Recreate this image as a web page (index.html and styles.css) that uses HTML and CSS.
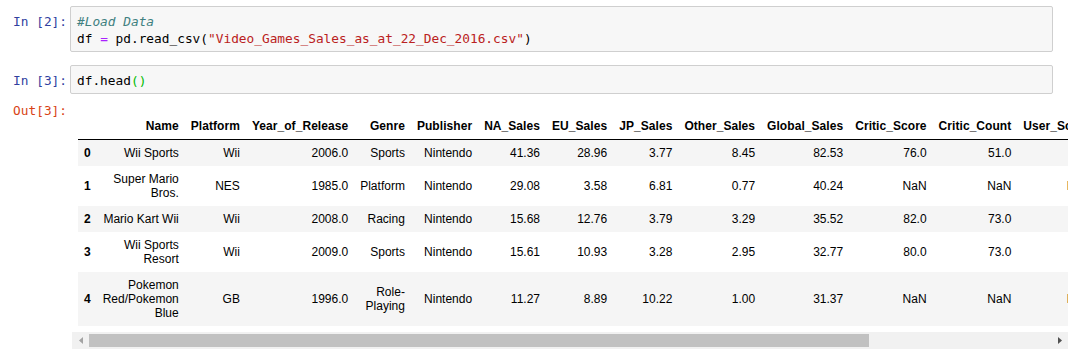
FILE: index.html
```html
<!DOCTYPE html>
<html lang="en">
<head>
<meta charset="utf-8">
<title>Notebook</title>
<link rel="stylesheet" href="styles.css">
</head>
<body>
<div class="notebook">
  <div class="cell">
    <div class="prompt prompt-in">In [2]:</div>
    <div class="input"><pre class="code"><span class="cm-comment">#Load Data</span>
df <span class="cm-operator">=</span> pd.read_csv(<span class="cm-string">"Video_Games_Sales_as_at_22_Dec_2016.csv"</span>)</pre></div>
  </div>
  <div class="cell cell-next">
    <div class="prompt prompt-in">In [3]:</div>
    <div class="input"><pre class="code">df.head<span class="cm-match">()</span></pre></div>
  </div>
  <div class="cell">
    <div class="prompt prompt-out">Out[3]:</div>
    <div class="output-area">
      <div class="table-clip">
        <table class="dataframe">
          <thead>
            <tr>
              <th></th>
              <th>Name</th>
              <th>Platform</th>
              <th>Year_of_Release</th>
              <th>Genre</th>
              <th>Publisher</th>
              <th>NA_Sales</th>
              <th>EU_Sales</th>
              <th>JP_Sales</th>
              <th>Other_Sales</th>
              <th>Global_Sales</th>
              <th>Critic_Score</th>
              <th>Critic_Count</th>
              <th>User_Score</th>
              <th>User_Count</th>
              <th>Developer</th>
              <th>Rating</th>
            </tr>
          </thead>
          <tbody>
            <tr>
              <th>0</th>
              <td>Wii Sports</td>
              <td>Wii</td>
              <td>2006.0</td>
              <td>Sports</td>
              <td>Nintendo</td>
              <td>41.36</td>
              <td>28.96</td>
              <td>3.77</td>
              <td>8.45</td>
              <td>82.53</td>
              <td>76.0</td>
              <td>51.0</td>
              <td>8</td>
              <td>322.0</td>
              <td>Nintendo</td>
              <td>E</td>
            </tr>
            <tr>
              <th>1</th>
              <td>Super Mario Bros.</td>
              <td>NES</td>
              <td>1985.0</td>
              <td>Platform</td>
              <td>Nintendo</td>
              <td>29.08</td>
              <td>3.58</td>
              <td>6.81</td>
              <td>0.77</td>
              <td>40.24</td>
              <td>NaN</td>
              <td>NaN</td>
              <td>NaN</td>
              <td>NaN</td>
              <td>NaN</td>
              <td>NaN</td>
            </tr>
            <tr>
              <th>2</th>
              <td>Mario Kart Wii</td>
              <td>Wii</td>
              <td>2008.0</td>
              <td>Racing</td>
              <td>Nintendo</td>
              <td>15.68</td>
              <td>12.76</td>
              <td>3.79</td>
              <td>3.29</td>
              <td>35.52</td>
              <td>82.0</td>
              <td>73.0</td>
              <td>8.3</td>
              <td>709.0</td>
              <td>Nintendo</td>
              <td>E</td>
            </tr>
            <tr>
              <th>3</th>
              <td>Wii Sports Resort</td>
              <td>Wii</td>
              <td>2009.0</td>
              <td>Sports</td>
              <td>Nintendo</td>
              <td>15.61</td>
              <td>10.93</td>
              <td>3.28</td>
              <td>2.95</td>
              <td>32.77</td>
              <td>80.0</td>
              <td>73.0</td>
              <td>8</td>
              <td>192.0</td>
              <td>Nintendo</td>
              <td>E</td>
            </tr>
            <tr>
              <th>4</th>
              <td>Pokemon <span class="nowrap">Red/Pokemon</span> Blue</td>
              <td>GB</td>
              <td>1996.0</td>
              <td>Role-Playing</td>
              <td>Nintendo</td>
              <td>11.27</td>
              <td>8.89</td>
              <td>10.22</td>
              <td>1.00</td>
              <td>31.37</td>
              <td>NaN</td>
              <td>NaN</td>
              <td>NaN</td>
              <td>NaN</td>
              <td>NaN</td>
              <td>NaN</td>
            </tr>
          </tbody>
        </table>
      </div>
      <div class="hscroll">
        <div class="sb-btn">
          <svg width="4" height="7" viewBox="0 0 4 7"><polygon points="4,0 4,7 0,3.5" fill="#a3a3a3"/></svg>
        </div>
        <div class="sb-track"><div class="sb-thumb"></div></div>
        <div class="sb-btn">
          <svg width="4" height="7" viewBox="0 0 4 7"><polygon points="0,0 0,7 4,3.5" fill="#505050"/></svg>
        </div>
      </div>
    </div>
  </div>
</div>
</body>
</html>
```

FILE: styles.css
```css
html, body {
  margin: 0;
  padding: 0;
  background: #ffffff;
}

body {
  font-family: "Liberation Sans", Arial, sans-serif;
  color: #000000;
}

.notebook {
  padding-top: 6px;
}

.cell {
  display: flex;
  align-items: flex-start;
}

.cell-next {
  margin-top: 13px;
}

.prompt {
  width: 70px;
  flex: none;
  box-sizing: border-box;
  padding-top: 7px;
  padding-right: 3px;
  text-align: right;
  font-family: "DejaVu Sans Mono", monospace;
  font-size: 12.8px;
  line-height: 17px;
  white-space: pre;
}

.prompt-in {
  color: #303f9f;
}

.prompt-out {
  color: #d84315;
  padding-top: 8px;
}

.input {
  flex: 1;
  min-width: 0;
  margin-right: 25px;
  border: 1px solid #cfcfcf;
  border-radius: 2px;
  background: #f7f7f7;
  padding: 6px 6px 4px;
}

.code {
  margin: 0;
  font-family: "DejaVu Sans Mono", monospace;
  font-size: 12.8px;
  line-height: 17px;
  color: #000000;
  white-space: pre;
}

.cm-comment {
  color: #408080;
  font-style: italic;
}

.cm-operator {
  color: #aa22ff;
}

.cm-string {
  color: #ba2121;
}

.cm-match {
  color: #00bb00;
}

.output-area {
  flex: 1;
  min-width: 0;
  margin-left: 2px;
  margin-right: 10px;
}

.table-clip {
  overflow: hidden;
  padding: 19px 0 6px 6px;
}

.dataframe {
  border-collapse: collapse;
  border-spacing: 0;
  font-family: "Liberation Sans", Arial, sans-serif;
  font-size: 12px;
  color: #000000;
}

.dataframe th,
.dataframe td {
  text-align: right;
  vertical-align: middle;
  padding: 6px;
  line-height: 14px;
  white-space: normal;
  border: none;
}

.dataframe th {
  font-weight: bold;
}

.dataframe thead th {
  border-bottom: 1px solid #000000;
  vertical-align: bottom;
  letter-spacing: 0.06px;
}

.dataframe tbody tr:nth-child(odd) {
  background: #f5f5f5;
}

.nowrap {
  white-space: nowrap;
}

.hscroll {
  display: flex;
  height: 17px;
  background: #f1f1f1;
}

.sb-btn {
  width: 17px;
  flex: none;
  display: flex;
  align-items: center;
  justify-content: center;
}

.sb-btn svg {
  display: block;
}

.sb-track {
  flex: 1;
  padding: 2px 0;
}

.sb-thumb {
  width: 780px;
  height: 13px;
  background: #c1c1c1;
}
```
